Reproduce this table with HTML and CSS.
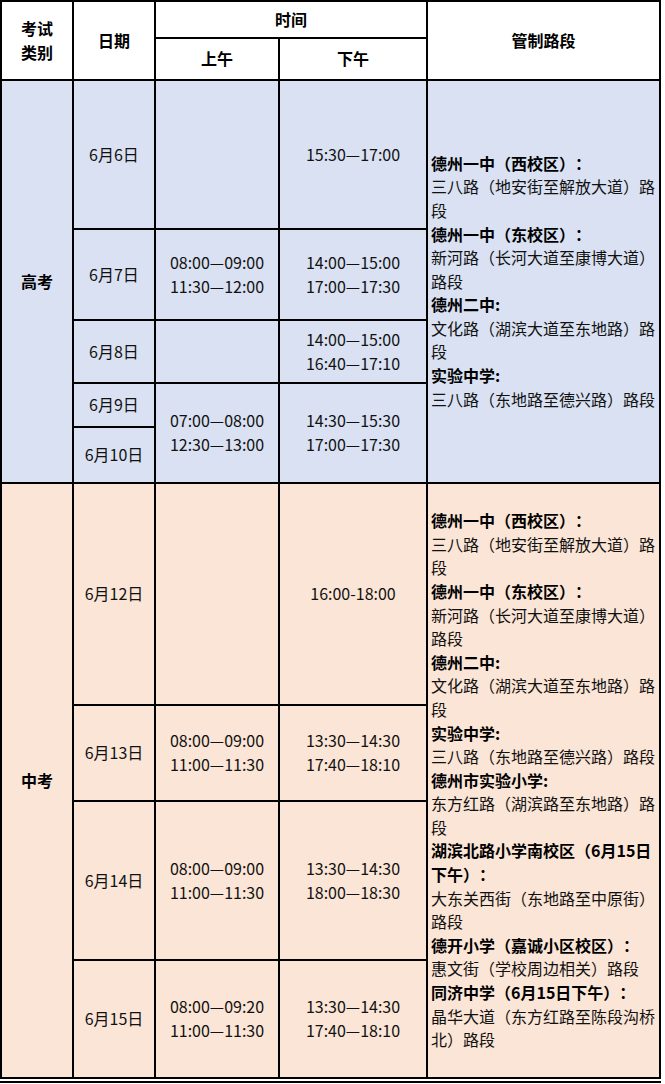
FILE: index.html
```html
<!DOCTYPE html>
<html lang="zh-CN">
<head>
<meta charset="utf-8">
<title>考试交通管制路段</title>
<link rel="stylesheet" href="styles.css">
</head>
<body>
<div class="sheet">
  <div class="cell head rs2">考试<br>类别</div>
  <div class="cell head rs2">日期</div>
  <div class="cell head cs2">时间</div>
  <div class="cell head rs2">管制路段</div>
  <div class="cell head">上午</div>
  <div class="cell head">下午</div>

  <div class="cell blue bold rs5">高考</div>
  <div class="cell blue">6月6日</div>
  <div class="cell blue"></div>
  <div class="cell blue">15:30—17:00</div>
  <div class="cell blue roads rs5">
    <div class="lines">
      <b>德州一中（西校区）：</b><br>三八路（地安街至解放大道）路段<br>
      <b>德州一中（东校区）：</b><br>新河路（长河大道至康博大道）路段<br>
      <b>德州二中:</b><br>文化路（湖滨大道至东地路）路段<br>
      <b>实验中学:</b><br>三八路（东地路至德兴路）路段
    </div>
  </div>
  <div class="cell blue">6月7日</div>
  <div class="cell blue">08:00—09:00<br>11:30—12:00</div>
  <div class="cell blue">14:00—15:00<br>17:00—17:30</div>
  <div class="cell blue">6月8日</div>
  <div class="cell blue"></div>
  <div class="cell blue">14:00—15:00<br>16:40—17:10</div>
  <div class="cell blue">6月9日</div>
  <div class="cell blue rs2">07:00—08:00<br>12:30—13:00</div>
  <div class="cell blue rs2">14:30—15:30<br>17:00—17:30</div>
  <div class="cell blue">6月10日</div>

  <div class="cell peach bold rs4">中考</div>
  <div class="cell peach">6月12日</div>
  <div class="cell peach"></div>
  <div class="cell peach">16:00-18:00</div>
  <div class="cell peach roads rs4">
    <div class="lines">
      <b>德州一中（西校区）：</b><br>三八路（地安街至解放大道）路段<br>
      <b>德州一中（东校区）：</b><br>新河路（长河大道至康博大道）路段<br>
      <b>德州二中:</b><br>文化路（湖滨大道至东地路）路段<br>
      <b>实验中学:</b><br>三八路（东地路至德兴路）路段<br>
      <b>德州市实验小学:</b><br>东方红路（湖滨路至东地路）路段<br>
      <b>湖滨北路小学南校区（6月15日下午）：</b><br>大东关西街（东地路至中原街）路段<br>
      <b>德开小学（嘉诚小区校区）：</b><br>惠文街（学校周边相关）路段<br>
      <b>同济中学（6月15日下午）：</b><br>晶华大道（东方红路至陈段沟桥北）路段
    </div>
  </div>
  <div class="cell peach">6月13日</div>
  <div class="cell peach">08:00—09:00<br>11:00—11:30</div>
  <div class="cell peach">13:30—14:30<br>17:40—18:10</div>
  <div class="cell peach">6月14日</div>
  <div class="cell peach">08:00—09:00<br>11:00—11:30</div>
  <div class="cell peach">13:30—14:30<br>18:00—18:30</div>
  <div class="cell peach">6月15日</div>
  <div class="cell peach">08:00—09:20<br>11:00—11:30</div>
  <div class="cell peach">13:30—14:30<br>17:40—18:10</div>
</div>
<div class="rule"></div>
</body>
</html>
```

FILE: styles.css
```css
html, body {
  margin: 0;
  padding: 0;
  background: #ffffff;
}

body {
  width: 665px;
  font-family: "Noto Sans CJK SC", "Noto Sans", sans-serif;
  font-size: 16px;
  line-height: 23.6px;
  color: #111111;
  text-spacing-trim: space-all;
}

.sheet {
  display: grid;
  width: 657px;
  grid-template-columns: 70px 80px 122px 146px 231px;
  grid-template-rows: 35px 40px 147px 89px 61px 42px 54px 220px 94px 157px 116px;
  gap: 2px;
  padding: 2px;
  background: #000000;
}

.cell {
  display: flex;
  align-items: center;
  justify-content: center;
  text-align: center;
  background: #ffffff;
}

.head {
  font-weight: bold;
  color: #000000;
}

.bold {
  font-weight: bold;
  color: #000000;
}

.blue {
  background: #d9e1f2;
}

.peach {
  background: #fbe5d6;
}

.rs2 { grid-row: span 2; }
.rs4 { grid-row: span 4; }
.rs5 { grid-row: span 5; }
.cs2 { grid-column: span 2; }

.roads {
  justify-content: flex-start;
  text-align: left;
  padding-left: 3px;
}

.lines {
  width: 228px;
}

.lines b {
  color: #000000;
}

.rule {
  width: 661px;
  height: 2px;
  margin-top: 2px;
  background: #000000;
}
```
